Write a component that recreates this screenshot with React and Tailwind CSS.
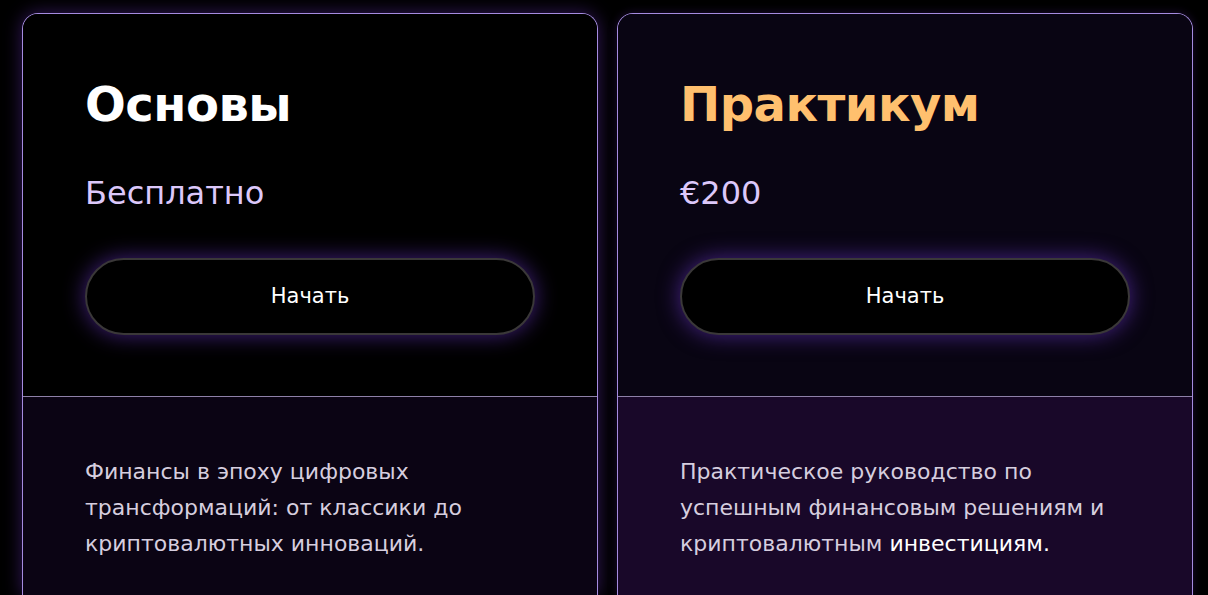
import React from 'react';

const plans = [
  {
    title: 'Основы',
    titleColor: 'text-white',
    price: 'Бесплатно',
    topBg: 'bg-black',
    bottomBg: 'bg-[#0b0414]',
    glow: 'shadow-[0_0_18px_rgba(110,50,200,0.45)]',
    text: (
      <>
        Финансы в эпоху цифровых
        <br />
        трансформаций: от классики до
        <br />
        криптовалютных инноваций.
      </>
    ),
  },
  {
    title: 'Практикум',
    titleColor: 'text-[#ffc06e]',
    price: '€200',
    topBg: 'bg-[#090513]',
    bottomBg: 'bg-[#190829]',
    glow: 'shadow-[0_0_10px_rgba(110,50,200,0.25)]',
    text: (
      <>
        Практическое руководство по
        <br />
        успешным финансовым решениям и
        <br />
        криптовалютным <span className="text-white">инвестициям.</span>
      </>
    ),
  },
];

const PlanCard = ({ plan }) => (
  <div
    className={`w-[576px] shrink-0 rounded-t-[16px] border border-b-0 border-[#a58be0] overflow-hidden ${plan.glow}`}
  >
    <div className={`${plan.topBg} px-[62px] pt-[64px] pb-[61px] border-b border-[#8e80a8]`}>
      <h2 className={`text-[48px] leading-[52px] font-bold tracking-[-0.5px] ${plan.titleColor}`}>{plan.title}</h2>
      <div className="mt-[44px] text-[32px] leading-[38px] text-[#dcc8fa]">{plan.price}</div>
      <button className="mt-[46px] w-[450px] h-[77px] rounded-full bg-black border-2 border-[#3a3838] text-white text-[21px] shadow-[0_0_22px_rgba(120,60,230,0.55)]">
        Начать
      </button>
    </div>
    <div className={`${plan.bottomBg} px-[62px] pt-[57px] pb-[60px] h-[260px]`}>
      <p className="text-[22px] leading-[36px] text-[#d6cedf] whitespace-nowrap">{plan.text}</p>
    </div>
  </div>
);

export default function App() {
  return (
    <div
      className="w-[1208px] h-[595px] overflow-hidden bg-black flex gap-[19px] pl-[22px] pt-[13px]"
      style={{ fontFamily: '"DejaVu Sans", "Noto Sans", sans-serif' }}
    >
      {plans.map((p) => (
        <PlanCard key={p.title} plan={p} />
      ))}
    </div>
  );
}
